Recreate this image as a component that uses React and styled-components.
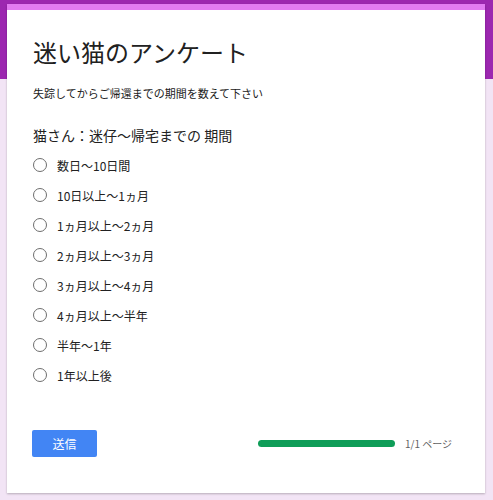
import React from 'react'
import styled, { createGlobalStyle } from 'styled-components'

const Global = createGlobalStyle`
    html, body {
        margin: 0;
        padding: 0;
        background: #f2e4f5;
        font-family: "Noto Sans CJK JP", "Noto Sans", sans-serif;
    }
`

const Page = styled.div`
    width: 493px;
    height: 500px;
    overflow: hidden;
    background: linear-gradient(to bottom, #9c27b0 0, #9c27b0 79px, #f2e4f5 79px);
    padding: 4px 8px 0 7px;
    box-sizing: border-box;
`

const Card = styled.div`
    width: 478px;
    height: 489px;
    background: #fff;
    border-top: 6px solid #e27bf2;
    box-shadow: 0 1px 2px rgba(0, 0, 0, 0.25);
    box-sizing: border-box;
    padding: 26px 26px 0 26px;
    display: flex;
    flex-direction: column;
`

const Title = styled.h1`
    margin: 0;
    font-size: 24px;
    font-weight: 400;
    line-height: 32px;
    color: #212121;
`

const Desc = styled.p`
    margin: 17px 0 0 0;
    font-size: 11px;
    line-height: 16px;
    color: #212121;
`

const Question = styled.div`
    margin-top: 24px;
    font-size: 14px;
    line-height: 20px;
    color: #212121;
`

const Options = styled.div`
    display: flex;
    flex-direction: column;
    margin-top: 5px;
`

const Option = styled.label`
    display: flex;
    align-items: center;
    gap: 10px;
    height: 30px;
    font-size: 12px;
    color: #212121;
`

const Radio = styled.span`
    width: 12px;
    height: 12px;
    border: 1.5px solid #6e6e6e;
    border-radius: 50%;
    flex-shrink: 0;
`

const Footer = styled.div`
    display: flex;
    align-items: center;
    margin-top: 40px;
`

const Submit = styled.button`
    width: 65px;
    height: 27px;
    background: #4285f4;
    border: none;
    border-radius: 2px;
    color: #fff;
    font-family: inherit;
    font-size: 12px;
    margin-left: -1px;
`

const Progress = styled.div`
    display: flex;
    align-items: center;
    margin-left: auto;
    margin-right: 7px;
    gap: 10px;
`

const Track = styled.div`
    width: 137px;
    height: 7px;
    border-radius: 4px;
    background: #0f9d58;
`

const PageText = styled.span`
    font-size: 10px;
    color: #616161;
`

const choices = ['数日〜10日間', '10日以上〜1ヵ月', '1ヵ月以上〜2ヵ月', '2ヵ月以上〜3ヵ月', '3ヵ月以上〜4ヵ月', '4ヵ月以上〜半年', '半年〜1年', '1年以上後']

export default function App() {
    return (
        <Page>
            <Global />
            <Card>
                <Title>迷い猫のアンケート</Title>
                <Desc>失踪してからご帰還までの期間を数えて下さい</Desc>
                <Question>猫さん：迷仔〜帰宅までの 期間</Question>
                <Options>
                    {choices.map((c) => (
                        <Option key={c}>
                            <Radio />
                            {c}
                        </Option>
                    ))}
                </Options>
                <Footer>
                    <Submit>送信</Submit>
                    <Progress>
                        <Track />
                        <PageText>1/1 ページ</PageText>
                    </Progress>
                </Footer>
            </Card>
        </Page>
    )
}
